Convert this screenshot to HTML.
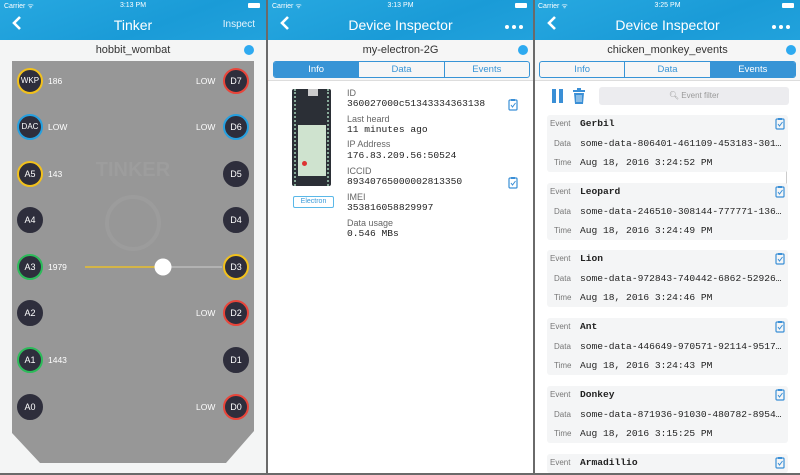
<!DOCTYPE html>
<html><head><meta charset="utf-8"><style>
*{margin:0;padding:0;box-sizing:border-box}
body{width:800px;height:475px;background:#6a6a6a;position:relative;overflow:hidden;font-family:"Liberation Sans",sans-serif}
.p{position:absolute;top:0;height:473px;overflow:hidden}
.hdr{position:absolute;left:0;top:0;width:100%;height:40px;background:linear-gradient(160deg,#27a8e0,#1a9bd7 60%,#22a2dc)}
.sb{position:absolute;top:2px;font-size:7px;color:#fff}
.ttl{position:absolute;top:17px;width:100%;text-align:center;color:#fff;font-size:14px}
.back{position:absolute;left:10px;top:15px;width:14px;height:16px}
.dots{position:absolute;right:10px;top:25px;display:flex;gap:3px;height:4px}
.dots i{display:block;width:4px;height:4px;border-radius:50%;background:#fff}
.name{position:absolute;top:44px;width:100%;text-align:center;font-size:11px;color:#333}
.dot{position:absolute;top:45px;width:10px;height:10px;border-radius:50%;background:#2eaaf0}
.pin{position:absolute;width:26px;height:26px;border-radius:50%;background:#2e2e3c;color:#fff;font-size:9px;text-align:center;line-height:22px;border:2px solid #2e2e3c}
.val{position:absolute;color:#fff;font-size:8.5px}
.tabs{position:absolute;top:61px;height:17px;border:1px solid #3794d6;border-radius:3px;display:flex;overflow:hidden}
.tabs div{flex:1;text-align:center;font-size:9.5px;line-height:15px;color:#3794d6;border-left:1px solid #3794d6}
.tabs div:first-child{border-left:none}
.tabs .on{background:#3794d6;color:#fff}
.lbl{position:absolute;font-size:9px;color:#666}
.mono{font-family:"Liberation Mono",monospace;font-size:9.6px;color:#222;position:absolute}
.card{position:absolute;left:12px;width:241px;height:57px;background:#f4f5f6;border-radius:3px}
.card .k{position:absolute;font-size:8px;color:#777}
.card .v{position:absolute;left:33px;font-family:"Liberation Mono",monospace;font-size:9.6px;color:#222;white-space:nowrap}
.clip{position:absolute;width:10px;height:13px}
</style></head><body>

<!-- PANEL 1 -->
<div class="p" style="left:0;width:266px;background:#f4f5f5">
<div class="hdr"></div>
<div class="sb" style="left:4px">Carrier ᯤ</div>
<div class="sb" style="left:0;width:100%;text-align:center">3:13 PM</div>
<div style="position:absolute;right:6px;top:3px;width:12px;height:5px;background:#fff;border-radius:1px"></div>
<svg class="back" viewBox="0 0 14 16"><path d="M10 2 L4 8 L10 14" stroke="#fff" stroke-width="2.6" fill="none"/></svg>
<div class="ttl">Tinker</div>
<div style="position:absolute;right:11px;top:19px;color:#e6f4fc;font-size:10px">Inspect</div>
<div class="name">hobbit_wombat</div>
<div class="dot" style="left:244px"></div>
<svg style="position:absolute;left:12px;top:61px" width="242" height="402"><polygon points="0,0 242,0 242,370 214,402 28,402 0,372" fill="#979797"/>
<text x="121" y="115" text-anchor="middle" font-family="Liberation Sans" font-weight="bold" font-size="20" fill="#9d9d9d">TINKER</text>
<circle cx="121" cy="162" r="26" fill="none" stroke="#9c9c9c" stroke-width="4"/>
<line x1="210" y1="206" x2="151" y2="206" stroke="#bbb" stroke-width="1.5"/>
<line x1="73" y1="206" x2="151" y2="206" stroke="#e8bf2e" stroke-width="1.5"/>
<circle cx="151" cy="206" r="8.5" fill="#fff"/>
</svg>
<div class="pin" style="left:17px;top:68px;border-color:#f2c11c;font-size:8px">WKP</div><div class="val" style="left:48px;top:76px">186</div>
<div class="pin" style="left:17px;top:114px;border-color:#26a0e0;font-size:8px">DAC</div><div class="val" style="left:48px;top:122px">LOW</div>
<div class="pin" style="left:17px;top:161px;border-color:#f2c11c">A5</div><div class="val" style="left:48px;top:169px">143</div>
<div class="pin" style="left:17px;top:207px">A4</div>
<div class="pin" style="left:17px;top:254px;border-color:#2dbb5a">A3</div><div class="val" style="left:48px;top:262px">1979</div>
<div class="pin" style="left:17px;top:300px">A2</div>
<div class="pin" style="left:17px;top:347px;border-color:#2dbb5a">A1</div><div class="val" style="left:48px;top:355px">1443</div>
<div class="pin" style="left:17px;top:394px">A0</div>
<div class="pin" style="left:223px;top:68px;border-color:#e8453a">D7</div><div class="val" style="left:196px;top:76px">LOW</div>
<div class="pin" style="left:223px;top:114px;border-color:#26a0e0">D6</div><div class="val" style="left:196px;top:122px">LOW</div>
<div class="pin" style="left:223px;top:161px">D5</div>
<div class="pin" style="left:223px;top:207px">D4</div>
<div class="pin" style="left:223px;top:254px;border-color:#f2c11c">D3</div>
<div class="pin" style="left:223px;top:300px;border-color:#e8453a">D2</div><div class="val" style="left:196px;top:308px">LOW</div>
<div class="pin" style="left:223px;top:347px">D1</div>
<div class="pin" style="left:223px;top:394px;border-color:#e8453a">D0</div><div class="val" style="left:196px;top:402px">LOW</div>
</div>

<!-- PANEL 2 -->
<div class="p" style="left:268px;width:265px;background:#fff">
<div style="position:absolute;top:40px;left:0;width:100%;height:41px;background:#f6f6f6;border-bottom:1px solid #ddd"></div>
<div class="hdr"></div>
<div class="sb" style="left:4px">Carrier ᯤ</div>
<div class="sb" style="left:0;width:100%;text-align:center">3:13 PM</div>
<div style="position:absolute;right:6px;top:3px;width:12px;height:5px;background:#fff;border-radius:1px"></div>
<svg class="back" viewBox="0 0 14 16"><path d="M10 2 L4 8 L10 14" stroke="#fff" stroke-width="2.6" fill="none"/></svg>
<div class="ttl">Device Inspector</div>
<div class="dots"><i></i><i></i><i></i></div>
<div class="name">my-electron-2G</div>
<div class="dot" style="left:250px"></div>
<div class="tabs" style="left:5px;width:257px"><div class="on">Info</div><div>Data</div><div>Events</div></div>
<div style="position:absolute;left:24px;top:89px;width:39px;height:97px;background:#2b2f36;border-radius:2px">
<div style="position:absolute;left:2px;top:0;width:3px;height:97px;border-left:2px dotted #8a9"></div>
<div style="position:absolute;right:1px;top:0;width:3px;height:97px;border-left:2px dotted #8a9"></div>
<div style="position:absolute;left:16px;top:0;width:10px;height:7px;background:#ccc"></div>
<div style="position:absolute;left:6px;top:36px;width:28px;height:51px;background:#cfe3cf"></div>
<div style="position:absolute;left:10px;top:72px;width:5px;height:5px;border-radius:50%;background:#d33"></div>
</div>
<div style="position:absolute;left:25px;top:196px;width:41px;height:12px;border:1px solid #5ab8e8;border-radius:2px;color:#3a9ad9;font-size:7px;text-align:center;line-height:10px">Electron</div>
<div class="lbl" style="left:79px;top:88px">ID</div><div class="mono" style="left:79px;top:98px">360027000c51343334363138</div>
<div class="lbl" style="left:79px;top:114px">Last heard</div><div class="mono" style="left:79px;top:124px">11 minutes ago</div>
<div class="lbl" style="left:79px;top:139px">IP Address</div><div class="mono" style="left:79px;top:150px">176.83.209.56:50524</div>
<div class="lbl" style="left:79px;top:166px">ICCID</div><div class="mono" style="left:79px;top:176px">89340765000002813350</div>
<div class="lbl" style="left:79px;top:192px">IMEI</div><div class="mono" style="left:79px;top:202px">353816058829997</div>
<div class="lbl" style="left:79px;top:218px">Data usage</div><div class="mono" style="left:79px;top:228px">0.546 MBs</div>
<svg class="clip" style="left:240px;top:98px" viewBox="0 0 10 13"><rect x="1" y="2" width="8" height="10" rx="1" fill="none" stroke="#3a8fd6" stroke-width="1.2"/><rect x="3" y="1" width="4" height="2" fill="#3a8fd6"/><path d="M3 7 L4.5 9 L7.5 5" stroke="#3a8fd6" fill="none"/></svg>
<svg class="clip" style="left:240px;top:176px" viewBox="0 0 10 13"><rect x="1" y="2" width="8" height="10" rx="1" fill="none" stroke="#3a8fd6" stroke-width="1.2"/><rect x="3" y="1" width="4" height="2" fill="#3a8fd6"/><path d="M3 7 L4.5 9 L7.5 5" stroke="#3a8fd6" fill="none"/></svg>
</div>

<!-- PANEL 3 -->
<div class="p" style="left:535px;width:265px;background:#fff">
<div style="position:absolute;top:40px;left:0;width:100%;height:41px;background:#f6f6f6;border-bottom:1px solid #ddd"></div>
<div class="hdr"></div>
<div class="sb" style="left:3px">Carrier ᯤ</div>
<div class="sb" style="left:0;width:100%;text-align:center">3:25 PM</div>
<div style="position:absolute;right:6px;top:3px;width:12px;height:5px;background:#fff;border-radius:1px"></div>
<svg class="back" viewBox="0 0 14 16"><path d="M10 2 L4 8 L10 14" stroke="#fff" stroke-width="2.6" fill="none"/></svg>
<div class="ttl">Device Inspector</div>
<div class="dots"><i></i><i></i><i></i></div>
<div class="name">chicken_monkey_events</div>
<div class="dot" style="left:251px"></div>
<div class="tabs" style="left:4px;width:257px"><div>Info</div><div>Data</div><div class="on">Events</div></div>
<div style="position:absolute;left:17px;top:89px;width:4px;height:14px;background:#3a8fd6"></div>
<div style="position:absolute;left:24px;top:89px;width:4px;height:14px;background:#3a8fd6"></div>
<svg style="position:absolute;left:37px;top:88px" width="14" height="16" viewBox="0 0 14 16"><rect x="1" y="2" width="12" height="2" fill="#3a8fd6"/><rect x="5" y="0" width="4" height="2" fill="#3a8fd6"/><path d="M2 5 H12 L11 16 H3 Z" fill="#3a8fd6"/><path d="M5 7 V14 M7 7 V14 M9 7 V14" stroke="#fff" stroke-width="0.8"/></svg>
<div style="position:absolute;left:64px;top:87px;width:190px;height:18px;background:#ececef;border-radius:3px;color:#999;font-size:8px;text-align:center;line-height:18px">&#x1F50D;&#xFE0E; Event filter</div>
<div style="position:absolute;left:251px;top:163px;width:1px;height:40px;background:#ccc"></div>

<div class="card" style="top:115px"><div class="k" style="left:3px;top:4px">Event</div><div class="v" style="top:3px;font-weight:bold">Gerbil</div><div class="k" style="left:7px;top:24px">Data</div><div class="v" style="top:23px">some-data-806401-461109-453183-301…</div><div class="k" style="left:7px;top:43px">Time</div><div class="v" style="top:42px">Aug 18, 2016 3:24:52 PM</div></div>
<div class="card" style="top:183px"><div class="k" style="left:3px;top:4px">Event</div><div class="v" style="top:3px;font-weight:bold">Leopard</div><div class="k" style="left:7px;top:24px">Data</div><div class="v" style="top:23px">some-data-246510-308144-777771-136…</div><div class="k" style="left:7px;top:43px">Time</div><div class="v" style="top:42px">Aug 18, 2016 3:24:49 PM</div></div>
<div class="card" style="top:250px"><div class="k" style="left:3px;top:4px">Event</div><div class="v" style="top:3px;font-weight:bold">Lion</div><div class="k" style="left:7px;top:24px">Data</div><div class="v" style="top:23px">some-data-972843-740442-6862-52926…</div><div class="k" style="left:7px;top:43px">Time</div><div class="v" style="top:42px">Aug 18, 2016 3:24:46 PM</div></div>
<div class="card" style="top:318px"><div class="k" style="left:3px;top:4px">Event</div><div class="v" style="top:3px;font-weight:bold">Ant</div><div class="k" style="left:7px;top:24px">Data</div><div class="v" style="top:23px">some-data-446649-970571-92114-9517…</div><div class="k" style="left:7px;top:43px">Time</div><div class="v" style="top:42px">Aug 18, 2016 3:24:43 PM</div></div>
<div class="card" style="top:386px"><div class="k" style="left:3px;top:4px">Event</div><div class="v" style="top:3px;font-weight:bold">Donkey</div><div class="k" style="left:7px;top:24px">Data</div><div class="v" style="top:23px">some-data-871936-91030-480782-8954…</div><div class="k" style="left:7px;top:43px">Time</div><div class="v" style="top:42px">Aug 18, 2016 3:15:25 PM</div></div>
<div class="card" style="top:454px;height:19px"><div class="k" style="left:3px;top:4px">Event</div><div class="v" style="top:3px;font-weight:bold">Armadillio</div></div>

<svg class="clip" style="left:240px;top:117px" viewBox="0 0 10 13"><rect x="1" y="2" width="8" height="10" rx="1" fill="none" stroke="#3a8fd6" stroke-width="1.2"/><rect x="3" y="1" width="4" height="2" fill="#3a8fd6"/><path d="M3 7 L4.5 9 L7.5 5" stroke="#3a8fd6" fill="none"/></svg>
<svg class="clip" style="left:240px;top:185px" viewBox="0 0 10 13"><rect x="1" y="2" width="8" height="10" rx="1" fill="none" stroke="#3a8fd6" stroke-width="1.2"/><rect x="3" y="1" width="4" height="2" fill="#3a8fd6"/><path d="M3 7 L4.5 9 L7.5 5" stroke="#3a8fd6" fill="none"/></svg>
<svg class="clip" style="left:240px;top:252px" viewBox="0 0 10 13"><rect x="1" y="2" width="8" height="10" rx="1" fill="none" stroke="#3a8fd6" stroke-width="1.2"/><rect x="3" y="1" width="4" height="2" fill="#3a8fd6"/><path d="M3 7 L4.5 9 L7.5 5" stroke="#3a8fd6" fill="none"/></svg>
<svg class="clip" style="left:240px;top:320px" viewBox="0 0 10 13"><rect x="1" y="2" width="8" height="10" rx="1" fill="none" stroke="#3a8fd6" stroke-width="1.2"/><rect x="3" y="1" width="4" height="2" fill="#3a8fd6"/><path d="M3 7 L4.5 9 L7.5 5" stroke="#3a8fd6" fill="none"/></svg>
<svg class="clip" style="left:240px;top:388px" viewBox="0 0 10 13"><rect x="1" y="2" width="8" height="10" rx="1" fill="none" stroke="#3a8fd6" stroke-width="1.2"/><rect x="3" y="1" width="4" height="2" fill="#3a8fd6"/><path d="M3 7 L4.5 9 L7.5 5" stroke="#3a8fd6" fill="none"/></svg>
<svg class="clip" style="left:240px;top:456px" viewBox="0 0 10 13"><rect x="1" y="2" width="8" height="10" rx="1" fill="none" stroke="#3a8fd6" stroke-width="1.2"/><rect x="3" y="1" width="4" height="2" fill="#3a8fd6"/><path d="M3 7 L4.5 9 L7.5 5" stroke="#3a8fd6" fill="none"/></svg>
</div>
</body></html>
